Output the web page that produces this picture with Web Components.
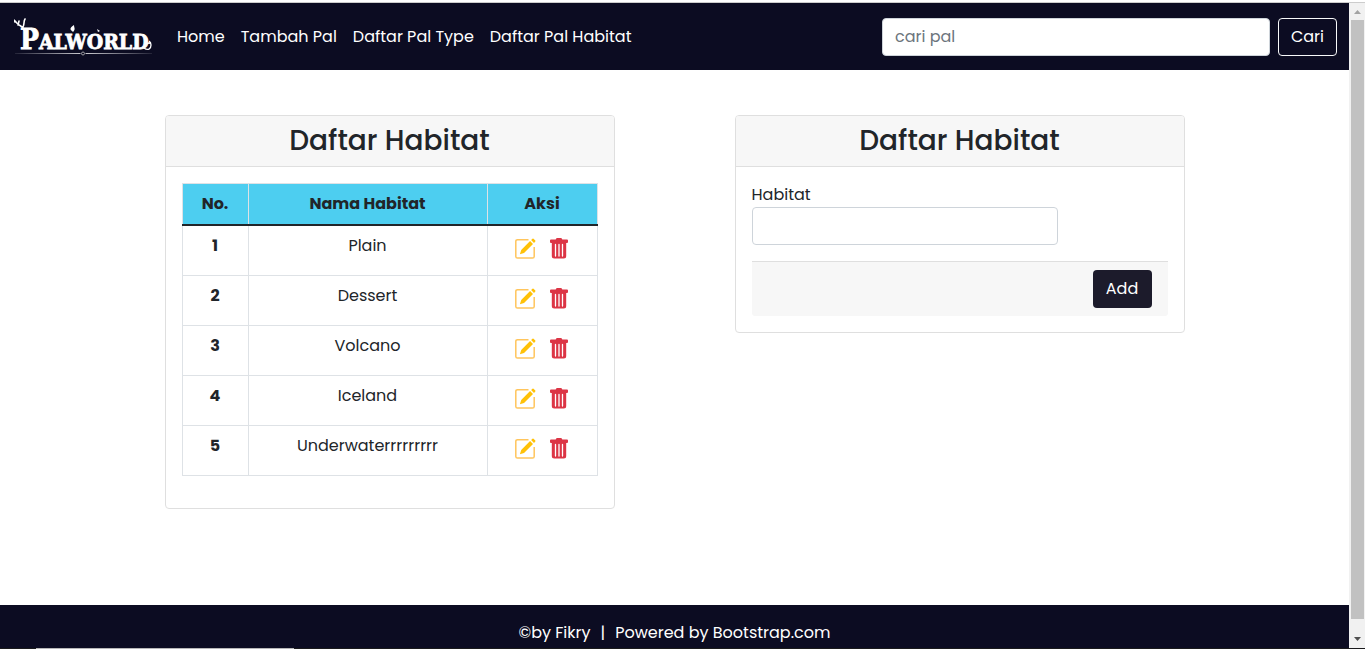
<!DOCTYPE html>
<html lang="id">
<head>
<meta charset="utf-8">
<meta name="viewport" content="width=device-width, initial-scale=1">
<title>Daftar Habitat</title>
<style>
html,body{margin:0;height:100%}
body{background:#fff;color:#212529;font:16px/24px Poppins,Inter,sans-serif}
</style>
</head>
<body>
<app-window>
  <pal-navbar></pal-navbar>
  <pal-content>
    <pal-card heading="Daftar Habitat"><habitat-table></habitat-table></pal-card>
    <pal-card heading="Daftar Habitat"><habitat-form></habitat-form></pal-card>
  </pal-content>
  <pal-footer></pal-footer>
</app-window>
<script>
const define = (name, html) => customElements.define(name, class extends HTMLElement {
  constructor() {
    super();
    this.attachShadow({ mode: 'open' }).innerHTML = '<style>*{box-sizing:border-box}</style>' + html(this);
  }
});

define('pal-logo', () => `
<style>:host{display:block}a{display:block;color:#fff}svg{display:block}
text{font-family:"DejaVu Serif Condensed","DejaVu Serif",serif;font-weight:700;fill:#fff;stroke:#fff;stroke-width:.8}</style>
<a href="#" aria-label="Palworld"><svg width="140" height="38" viewBox="0 0 140 38">
<defs><linearGradient id="rule"><stop offset="0" stop-color="#fff" stop-opacity=".1"/><stop offset=".5" stop-color="#fff" stop-opacity=".8"/><stop offset="1" stop-color="#fff" stop-opacity=".1"/></linearGradient></defs>
<text x="6" y="31" font-size="21"><tspan font-size="28">P</tspan>ALWORLD</text>
<path d="M10 12C10 8 4 8 2 4L0 2M4 7L5 3M8 9C11 9 9 4 11 1M1 4L0 3" fill="none" stroke="#fff" stroke-width="1.600" stroke-linecap="round"/>
<path d="M58 13C55 11 57 9 60 7C60 10 62 11 59 14ZM84 14L83 11L86 13Z" fill="#fff"/>
<path d="M130 30C134 33 137 31 137 27C137 24 135 23 135 23M133 26C135 24 136 25 137 26" fill="none" stroke="#fff" stroke-width="1.300"/>
<path d="M1 35H66.500V36H1ZM71.500 35H138V36H71.500Z" fill="url(#rule)"/>
<circle cx="69" cy="35.500" r="1.500" fill="none" stroke="#bbb" stroke-width=".8"/>
</svg></a>`);

define('pal-navbar', () => `
<style>
:host{display:block;background:#0c0c22}
nav{display:flex;align-items:center;padding:15px 12px 14px 14px}
pal-logo{margin-right:15px}
ul{display:flex;margin:0;padding:0;list-style:none;flex:1}
li a{display:block;padding:7px 8px;color:#fff;text-decoration:none;white-space:nowrap}
form{display:flex;gap:8px;flex:0 1 455px}
input{flex:1;min-width:0;height:38px;padding:5px 12px 7px;font:inherit;color:#495057;background:#fff;border:1px solid #ced4da;border-radius:4px}
input::placeholder{color:#6c757d;opacity:1}
button{width:59px;height:38px;padding:0;font:inherit;color:#fff;background:transparent;border:1px solid #f8f9fa;border-radius:4px}
</style>
<nav><pal-logo></pal-logo>
<ul><li><a href="#">Home</a></li><li><a href="#">Tambah Pal</a></li><li><a href="#">Daftar Pal Type</a></li><li><a href="#">Daftar Pal Habitat</a></li></ul>
<form onsubmit="return false"><input type="search" placeholder="cari pal" aria-label="cari pal"><button type="submit">Cari</button></form></nav>`);

define('pal-content', () => `
<style>:host{display:grid;grid-template-columns:1fr 1fr;justify-items:center;align-items:start;box-sizing:border-box;width:100%;max-width:1140px;margin:0 auto;padding-top:45px;flex:1}</style><slot></slot>`);

define('pal-card', el => `
<style>
:host{display:block;width:100%;max-width:450px;box-sizing:border-box;border:1px solid #dfdfdf;border-radius:4px;overflow:hidden;background:#fff}
h3{margin:0;padding:8px 16px;background:#f7f7f7;border-bottom:1px solid #dfdfdf;font-size:28px;line-height:34px;font-weight:500;text-align:center}
div{padding:16px}
</style><h3>${el.getAttribute('heading')}</h3><div><slot></slot></div>`);

define('habitat-table', () => `
<style>
:host{display:block;padding-bottom:16px}
table{width:100%;border-collapse:collapse;table-layout:fixed;text-align:center}
.no{width:66px}.act{width:110px}
th,td{border:1px solid #dee2e6;padding:8px;vertical-align:top;height:50px}
thead th{background:#4dcef0;border-bottom:2px solid #212529;padding-bottom:7px;height:41px}
tbody tr:first-child>*{height:51px}
th{font-weight:700}
.icons{display:flex;justify-content:center;gap:14px;padding-top:4px}
button{display:block;padding:0;border:0;background:none;height:21px}
svg{display:block}
</style>
<table><colgroup><col class="no"><col><col class="act"></colgroup>
<thead><tr><th scope="col">No.</th><th scope="col">Nama Habitat</th><th scope="col">Aksi</th></tr></thead>
<tbody>${['Plain','Dessert','Volcano','Iceland','Underwaterrrrrrrrr'].map((n, i) => `<tr><th scope="row">${i + 1}</th><td>${n}</td><td><div class="icons">
<button type="button" aria-label="Edit ${n}"><svg width="21" height="21" viewBox="0 0 21 21"><path d="M13.500 1.700H2.500Q.8 1.700.8 3.400V18.400Q.8 20.100 2.500 20.100H17.500Q19.200 20.100 19.200 18.400V9" fill="none" stroke="#ffc55c" stroke-width="1.500"/><path d="M15.100 3.100L18 6L9 14.900L4.900 16.300L6.200 12ZM16.100 2.100L17.500.8Q18 .4 18.500.8L20.300 2.600Q20.700 3.100 20.300 3.600L19 5Z" fill="#ffc107"/></svg></button>
<button type="button" aria-label="Hapus ${n}"><svg width="19" height="21" viewBox="0 0 19 21"><path d="M1 1.500H5.700Q6 0 7 0H11Q12 0 12.300 1.500H17Q18 1.500 18 2.500V4Q18 5 17 5H16.200V18Q16.200 20.500 13.700 20.500H4.300Q1.800 20.500 1.800 18V5H1Q0 5 0 4V2.500Q0 1.500 1 1.500Z" fill="#dc3545"/><path d="M5.500 6.500V18M9 6.500V18M12.500 6.500V18" stroke="#fff" stroke-width="1.300" stroke-linecap="round"/></svg></button>
</div></td></tr>`).join('')}</tbody></table>`);

define('habitat-form', () => `
<style>
:host{display:block}
label{display:block}
input{display:block;width:306px;max-width:100%;height:38px;margin-bottom:16px;padding:6px 12px;font:inherit;border:1px solid #ced4da;border-radius:4px;background:#fff}
footer{display:flex;justify-content:flex-end;padding:8px 16px;background:#f7f7f7;border-top:1px solid #dfdfdf;border-radius:0 0 3px 3px}
button{width:59px;height:38px;padding:0;font:inherit;color:#fff;background:#1c1b2b;border:0;border-radius:4px}
</style>
<form onsubmit="return false"><label for="habitat">Habitat</label><input id="habitat" type="text"><footer><button type="submit">Add</button></footer></form>`);

define('pal-footer', () => `
<style>:host{display:block;background:#0c0c22;color:#fff}p{display:flex;justify-content:center;gap:10px;margin:0;padding:16px 16px 3px}</style><p><span>©by Fikry</span><span>|</span><span>Powered by Bootstrap.com</span></p>`);

define('scroll-bar', () => `
<style>
:host{display:flex;flex-direction:column;background:#f1f1f1}
svg{display:block;flex:none}
div{flex:1;margin:0 1px 0 2px;background:#c1c1c1}
</style>
<svg width="16" height="17" viewBox="0 0 16 17"><path d="M5 11L8.500 7L12 11Z" fill="#a3a3a3"/></svg><div></div>
<svg width="16" height="29" viewBox="0 0 16 29"><path d="M5 18L8.500 22L12 18Z" fill="#505050"/></svg>`);

define('app-window', () => `
<style>
:host{display:grid;grid-template-columns:1fr 16px;grid-template-rows:3px 1fr 1px;min-height:100vh}
.top{grid-column:1/3;border-bottom:1px solid #ccc}
.page{display:flex;flex-direction:column;min-width:0}
.bottom{grid-column:1/3;background:#1a1a1c;padding-left:36px}
.bottom div{width:258px;height:1px;background:#b8b8b8}
</style>
<div class="top"></div><div class="page"><slot></slot></div><scroll-bar></scroll-bar><div class="bottom"><div></div></div>`);
</script>
</body>
</html>
